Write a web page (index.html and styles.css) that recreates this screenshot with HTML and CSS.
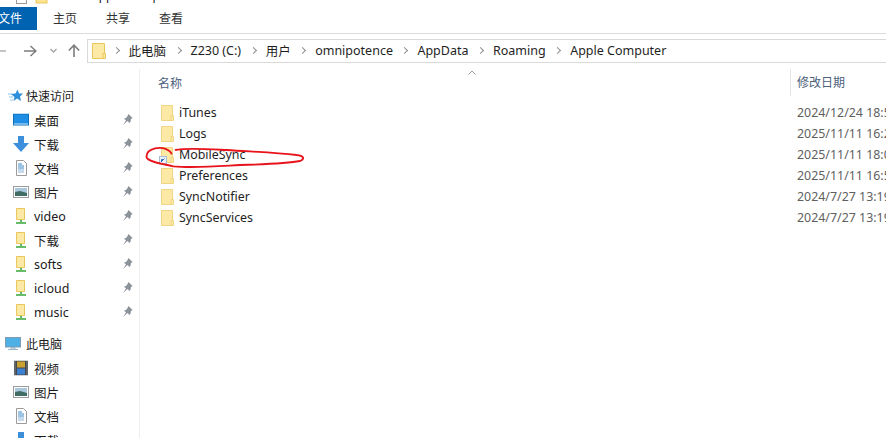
FILE: index.html
```html
<!DOCTYPE html>
<html lang="zh">
<head>
<meta charset="utf-8">
<title>Apple Computer</title>
<link rel="stylesheet" href="styles.css">
</head>
<body>
<div class="window">
  <div class="titlebar">
    <span class="tb-box"></span>
    <svg class="tb-folder" width="14" height="7" viewBox="0 0 14 7"><rect x="1" y="-6" width="11" height="9" fill="#fde38f" stroke="#e9c85c"/></svg>
    <span class="tb-title">Apple Computer</span>
  </div>
  <div class="ribbon">
    <div class="tab active">文件</div>
    <div class="tab">主页</div>
    <div class="tab">共享</div>
    <div class="tab">查看</div>
  </div>
  <div class="navbar">
    <div class="navbtns">
      <svg class="nav-back" width="8" height="12" viewBox="0 0 8 12"><path d="M0 6h8" stroke="#b5b5b5" stroke-width="1.6" fill="none"/></svg>
      <svg class="nav-fwd" width="13" height="12" viewBox="0 0 13 12"><path d="M0 6h11.5M6.5 1l5.5 5-5.500 5" stroke="#7c7c7c" stroke-width="1.5" fill="none"/></svg>
      <svg class="nav-down" width="7" height="5" viewBox="0 0 7 5"><path d="M.5 1l3 3 3-3" stroke="#a2a2a2" stroke-width="1.3" fill="none"/></svg>
      <svg class="nav-up" width="12" height="13" viewBox="0 0 12 13"><path d="M6 13V2M.8 6.500L6 1.200l5.200 5.300" stroke="#7c7c7c" stroke-width="1.6" fill="none"/></svg>
    </div>
    <div class="address">
      <svg class="addr-folder" width="14" height="16" viewBox="0 0 14 16"><path d="M.5.5h12v15H.5z" fill="#fde9a6" stroke="#eac75a"/><path d="M11 10.500h2.500v5H11z" fill="#fde9a6" stroke="#eac75a"/></svg>
      <i class="sep"></i>
      <span class="crumb">此电脑</span><i class="sep"></i>
      <span class="crumb">Z230 (C:)</span><i class="sep"></i>
      <span class="crumb">用户</span><i class="sep"></i>
      <span class="crumb">omnipotence</span><i class="sep"></i>
      <span class="crumb">AppData</span><i class="sep"></i>
      <span class="crumb">Roaming</span><i class="sep"></i>
      <span class="crumb">Apple Computer</span>
    </div>
  </div>
  <div class="main">
    <nav class="sidebar">
      <div class="side-head">
        <svg width="16" height="14" viewBox="0 0 16 14"><path d="M10.500 .5L12 4.500h4l-3 3 1 4.500-4-2.500L6.500 12l1-4L4 5l4.500-.5z" fill="#2c8fdc"/><path d="M1 5h4M2 8h4M3 11h3" stroke="#8cc4ee"/></svg>
        <span>快速访问</span>
      </div>
      <div class="side-item">
        <svg class="side-icon" width="16" height="13" viewBox="0 0 16 13"><rect x=".5" y=".5" width="15" height="11" fill="#1f8fe6" stroke="#0f6fb8"/><path d="M1 10.500h14" stroke="#cfe6f7"/></svg>
        <span class="side-label">桌面</span><svg class="pin" width="11" height="12" viewBox="0 0 11 12"><path d="M6.500 0L10.500 4l-1.500 1-.5 2.500-1 1.500L5.500 7 1 11l3-4.500L2 4.500 4 4l1.500-2z" fill="#8c939a"/></svg>
      </div>
      <div class="side-item">
        <svg class="side-icon" width="16" height="16" viewBox="0 0 16 16"><path d="M5 0h6v7h5l-8 9-8-9h5z" fill="#3d8fdc"/></svg>
        <span class="side-label">下载</span><svg class="pin" width="11" height="12" viewBox="0 0 11 12"><path d="M6.500 0L10.500 4l-1.500 1-.5 2.500-1 1.500L5.500 7 1 11l3-4.500L2 4.500 4 4l1.500-2z" fill="#8c939a"/></svg>
      </div>
      <div class="side-item">
        <svg class="side-icon" width="16" height="16" viewBox="0 0 16 16"><path d="M3.500.5h7l3 3v12h-10z" fill="#fff" stroke="#9a9a9a"/><path d="M5 4h4M5 6h6M5 8h6" stroke="#3d88c8"/><path d="M5 10h6M5 12h6" stroke="#8db4d6"/></svg>
        <span class="side-label">文档</span><svg class="pin" width="11" height="12" viewBox="0 0 11 12"><path d="M6.500 0L10.500 4l-1.500 1-.5 2.500-1 1.500L5.500 7 1 11l3-4.500L2 4.500 4 4l1.500-2z" fill="#8c939a"/></svg>
      </div>
      <div class="side-item">
        <svg class="side-icon" width="16" height="12" viewBox="0 0 16 12"><rect x=".5" y=".5" width="15" height="11" fill="#fff" stroke="#9c9c9c"/><rect x="2" y="2" width="12" height="8" fill="#a9c8de"/><path d="M2 6l5-1 7 2v3H2z" fill="#3f6d63"/></svg>
        <span class="side-label">图片</span><svg class="pin" width="11" height="12" viewBox="0 0 11 12"><path d="M6.500 0L10.500 4l-1.500 1-.5 2.500-1 1.500L5.500 7 1 11l3-4.500L2 4.500 4 4l1.500-2z" fill="#8c939a"/></svg>
      </div>
      <div class="side-item">
        <svg class="side-icon lib" width="10" height="16" viewBox="0 0 10 16"><path d="M.5.500h8v11h-8z" fill="#fde9a6" stroke="#eac75a"/><path d="M5 12v2M0 15h10" stroke="#3aa53a" stroke-width="1.600"/></svg>
        <span class="side-label">video</span><svg class="pin" width="11" height="12" viewBox="0 0 11 12"><path d="M6.500 0L10.500 4l-1.500 1-.5 2.500-1 1.500L5.500 7 1 11l3-4.500L2 4.500 4 4l1.500-2z" fill="#8c939a"/></svg>
      </div>
      <div class="side-item">
        <svg class="side-icon lib" width="10" height="16" viewBox="0 0 10 16"><path d="M.5.500h8v11h-8z" fill="#fde9a6" stroke="#eac75a"/><path d="M5 12v2M0 15h10" stroke="#3aa53a" stroke-width="1.600"/></svg>
        <span class="side-label">下载</span><svg class="pin" width="11" height="12" viewBox="0 0 11 12"><path d="M6.500 0L10.500 4l-1.500 1-.5 2.500-1 1.500L5.500 7 1 11l3-4.500L2 4.500 4 4l1.500-2z" fill="#8c939a"/></svg>
      </div>
      <div class="side-item">
        <svg class="side-icon lib" width="10" height="16" viewBox="0 0 10 16"><path d="M.5.500h8v11h-8z" fill="#fde9a6" stroke="#eac75a"/><path d="M5 12v2M0 15h10" stroke="#3aa53a" stroke-width="1.600"/></svg>
        <span class="side-label">softs</span><svg class="pin" width="11" height="12" viewBox="0 0 11 12"><path d="M6.500 0L10.500 4l-1.500 1-.5 2.500-1 1.500L5.500 7 1 11l3-4.500L2 4.500 4 4l1.500-2z" fill="#8c939a"/></svg>
      </div>
      <div class="side-item">
        <svg class="side-icon lib" width="10" height="16" viewBox="0 0 10 16"><path d="M.5.500h8v11h-8z" fill="#fde9a6" stroke="#eac75a"/><path d="M5 12v2M0 15h10" stroke="#3aa53a" stroke-width="1.600"/></svg>
        <span class="side-label">icloud</span><svg class="pin" width="11" height="12" viewBox="0 0 11 12"><path d="M6.500 0L10.500 4l-1.500 1-.5 2.500-1 1.500L5.500 7 1 11l3-4.500L2 4.500 4 4l1.500-2z" fill="#8c939a"/></svg>
      </div>
      <div class="side-item">
        <svg class="side-icon lib" width="10" height="16" viewBox="0 0 10 16"><path d="M.5.500h8v11h-8z" fill="#fde9a6" stroke="#eac75a"/><path d="M5 12v2M0 15h10" stroke="#3aa53a" stroke-width="1.600"/></svg>
        <span class="side-label">music</span><svg class="pin" width="11" height="12" viewBox="0 0 11 12"><path d="M6.500 0L10.500 4l-1.500 1-.5 2.500-1 1.500L5.500 7 1 11l3-4.500L2 4.500 4 4l1.500-2z" fill="#8c939a"/></svg>
      </div>
      <div class="side-head pc">
        <svg width="16" height="14" viewBox="0 0 16 14"><rect x=".5" y=".5" width="15" height="9.500" fill="#4fb0e6" stroke="#7e9db5"/><path d="M6 10.500h4V12H6zM3 12.500h10" stroke="#9ab4c8" fill="none"/></svg>
        <span>此电脑</span>
      </div>
      <div class="side-item">
        <svg class="side-icon film" width="14" height="15" viewBox="0 0 14 15"><rect width="14" height="15" fill="#44484c"/><rect x="3" y="1" width="8" height="6" fill="#c9a12f"/><rect x="3" y="8" width="8" height="6" fill="#3d7fd0"/><path d="M1 1v13M13 1v13" stroke="#bbb" stroke-dasharray="1 1"/></svg>
        <span class="side-label">视频</span>
      </div>
      <div class="side-item">
        <svg class="side-icon" width="16" height="12" viewBox="0 0 16 12"><rect x=".5" y=".5" width="15" height="11" fill="#fff" stroke="#9c9c9c"/><rect x="2" y="2" width="12" height="8" fill="#a9c8de"/><path d="M2 6l5-1 7 2v3H2z" fill="#3f6d63"/></svg>
        <span class="side-label">图片</span>
      </div>
      <div class="side-item">
        <svg class="side-icon" width="16" height="16" viewBox="0 0 16 16"><path d="M3.500.5h7l3 3v12h-10z" fill="#fff" stroke="#9a9a9a"/><path d="M5 4h4M5 6h6M5 8h6" stroke="#3d88c8"/><path d="M5 10h6M5 12h6" stroke="#8db4d6"/></svg>
        <span class="side-label">文档</span>
      </div>
      <div class="side-item">
        <svg class="side-icon" width="16" height="16" viewBox="0 0 16 16"><path d="M5 0h6v7h5l-8 9-8-9h5z" fill="#3d8fdc"/></svg>
        <span class="side-label">下载</span>
      </div>
    </nav>
    <section class="content">
      <div class="sort-caret"><svg width="8" height="5" viewBox="0 0 8 5"><path d="M.5 4.500L4 1l3.500 3.500" stroke="#9aa0a6" fill="none"/></svg></div>
      <div class="headers">
        <div class="col-name">名称</div>
        <div class="col-date">修改日期</div>
      </div>
      <div class="rows">
        <div class="row"><svg class="folder" width="13" height="16" viewBox="0 0 13 16"><path d="M.5.500h11v15H.5z" fill="#fde9a6" stroke="#f0d684"/><path d="M10 10.500h2.500v5H10z" fill="#fde9a6" stroke="#f0d684"/></svg><span class="name">iTunes</span><span class="date">2024/12/24 18:59</span></div>
        <div class="row"><svg class="folder" width="13" height="16" viewBox="0 0 13 16"><path d="M.5.500h11v15H.5z" fill="#fde9a6" stroke="#f0d684"/><path d="M10 10.500h2.500v5H10z" fill="#fde9a6" stroke="#f0d684"/></svg><span class="name">Logs</span><span class="date">2025/11/11 16:22</span></div>
        <div class="row"><span class="shortcut-wrap"><svg class="folder" width="13" height="16" viewBox="0 0 13 16"><path d="M.5.500h11v15H.5z" fill="#fde9a6" stroke="#f0d684"/><path d="M10 10.500h2.500v5H10z" fill="#fde9a6" stroke="#f0d684"/></svg><svg class="shortcut" width="8" height="8" viewBox="0 0 8 8"><rect x=".5" y=".5" width="7" height="7" fill="#eef3fa" stroke="#a9bcd6"/><path d="M2.500 6V3.500H5M3 5l2.500-2.500" stroke="#2a6fc4" fill="none"/></svg></span><span class="name">MobileSync</span><span class="date">2025/11/11 18:00</span></div>
        <div class="row"><svg class="folder" width="13" height="16" viewBox="0 0 13 16"><path d="M.5.500h11v15H.5z" fill="#fde9a6" stroke="#f0d684"/><path d="M10 10.500h2.500v5H10z" fill="#fde9a6" stroke="#f0d684"/></svg><span class="name">Preferences</span><span class="date">2025/11/11 16:55</span></div>
        <div class="row"><svg class="folder" width="13" height="16" viewBox="0 0 13 16"><path d="M.5.500h11v15H.5z" fill="#fde9a6" stroke="#f0d684"/><path d="M10 10.500h2.500v5H10z" fill="#fde9a6" stroke="#f0d684"/></svg><span class="name">SyncNotifier</span><span class="date">2024/7/27 13:19</span></div>
        <div class="row"><svg class="folder" width="13" height="16" viewBox="0 0 13 16"><path d="M.5.500h11v15H.5z" fill="#fde9a6" stroke="#f0d684"/><path d="M10 10.500h2.500v5H10z" fill="#fde9a6" stroke="#f0d684"/></svg><span class="name">SyncServices</span><span class="date">2024/7/27 13:19</span></div>
      </div>
    </section>
    <svg class="scribble" width="180" height="30" viewBox="0 150 540 90"><path d="M95 178C92 165 70 155 45 160C25 165 18 175 20 188C28 200 60 205 100 214C160 220 230 214 300 210C370 208 440 206 480 198C495 192 492 182 470 180C400 172 330 170 260 165C200 162 140 158 105 165" fill="none" stroke="#e8141c" stroke-width="5.500"/></svg>
  </div>
</div>
</body>
</html>
```
FILE: styles.css
```css
* { box-sizing: border-box; }
html, body { margin: 0; padding: 0; background: #fff; }
body { width: 886px; height: 438px; overflow: hidden; font-family: "Noto Sans", "Noto Sans CJK SC", sans-serif; font-size: 12px; color: #1a1a1a; }
.window { display: flex; flex-direction: column; height: 438px; }
.titlebar { height: 7px; display: flex; align-items: flex-start; overflow: hidden; padding-left: 16px; gap: 17px; }
.tb-box { width: 11px; height: 4px; border: 1px solid #9a9a9a; border-top: 0; }
.tb-folder { margin-left: -9px; }
.tb-title { margin-top: -13px; margin-left: 25px; font-size: 12px; }
.ribbon { height: 27px; display: flex; border-bottom: 1px solid #dadbdc; }
.tab { height: 23px; line-height: 24px; text-align: center; font-size: 12px; color: #333; }
.tab.active { width: 37px; background: #0063b1; color: #fff; text-align: left; text-indent: -2px; margin-right: 14px; overflow: hidden; }
.tab:nth-child(2) { width: 28px; margin-right: 25px; }
.tab:nth-child(3) { width: 28px; margin-right: 25px; }
.tab:nth-child(4) { width: 28px; }
.navbar { height: 35px; display: flex; align-items: flex-start; padding-top: 5px; }
.navbtns { width: 87px; height: 23px; display: flex; align-items: center; }
.nav-back { margin-right: 18px; margin-left: -2px; }
.nav-fwd { margin-right: 13px; }
.nav-down { margin-right: 11px; }
.address { width: 799px; height: 24px; border: 1px solid #d9d9d9; border-right: 0; display: flex; align-items: center; padding: 0 0 2px 4px; font-size: 12.500px; color: #1f1f1f; }
.addr-folder { margin: 2px -2px 0 0; }
.crumb { white-space: nowrap; }
.sep { width: 5px; height: 5px; border-top: 1.500px solid #8f8f8f; border-right: 1.500px solid #8f8f8f; transform: rotate(45deg); margin: 0 10px 0 9.500px; }
.main { position: relative; flex: 1; display: flex; min-height: 0; overflow: hidden; }
.sidebar { width: 140px; flex: none; border-right: 1px solid #eeeeee; padding-top: 15px; }
.side-head { height: 24px; display: flex; align-items: center; padding-left: 7px; gap: 3px; font-size: 12px; color: #222; }
.side-head.pc { margin-top: 8px; padding-left: 5px; gap: 5px; }
.side-item { height: 24px; display: flex; align-items: center; position: relative; padding-left: 34px; font-size: 12.500px; }
.side-icon { position: absolute; left: 13px; top: 50%; transform: translateY(-50%); }
.side-icon.lib { left: 16px; }
.side-icon.film { left: 14px; }
.side-label { flex: 1; }
.pin { margin-right: 6px; }
.content { position: relative; flex: 1; }
.sort-caret { position: absolute; left: 328px; top: 1px; line-height: 0; }
.headers { display: flex; height: 27px; align-items: center; font-size: 12px; color: #4c607a; }
.col-name { width: 650px; padding-left: 18px; }
.col-date { border-left: 1px solid #e5e5e5; height: 27px; line-height: 27px; padding-left: 6px; flex: 1; }
.rows { padding-top: 6px; }
.row { height: 21px; display: flex; align-items: center; padding-left: 21px; font-size: 12.400px; white-space: nowrap; }
.folder { flex: none; }
.shortcut-wrap { position: relative; display: block; width: 13px; height: 16px; flex: none; }
.shortcut { position: absolute; left: -2px; bottom: -1px; }
.name { width: 623px; padding-left: 5px; color: #1f1f1f; flex: none; }
.date { color: #5f5f5f; }
.scribble { position: absolute; left: 140px; top: 76px; }
```
